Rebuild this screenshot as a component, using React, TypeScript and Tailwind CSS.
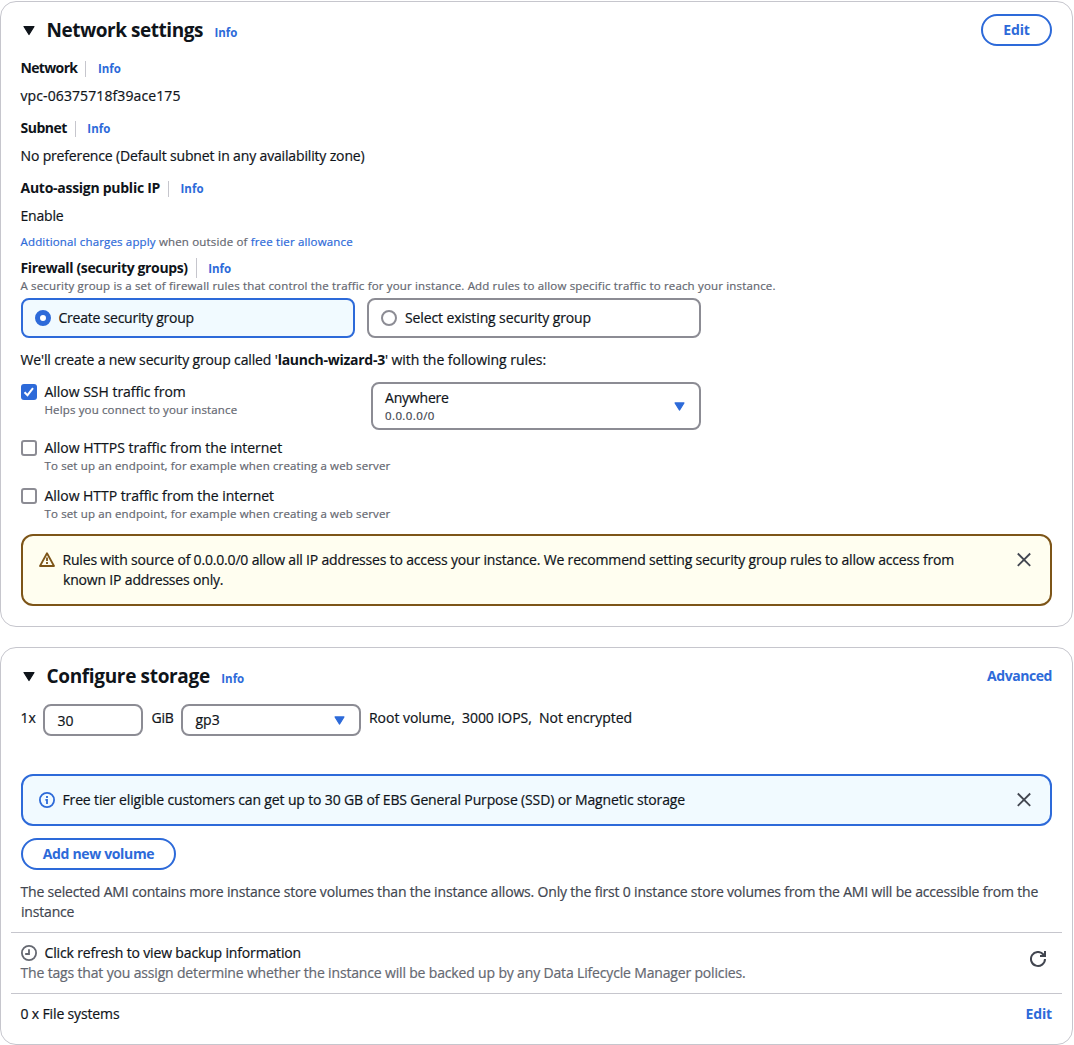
import type { ReactNode } from "react";

function Caret({ className }: { className: string }) {
  return (
    <svg viewBox="0 0 12 10" className={className} fill="currentColor" stroke="currentColor" strokeLinejoin="round">
      <path d="M1 1h10L6 9Z" strokeWidth="1.2" />
    </svg>
  );
}

function CloseIcon() {
  return (
    <svg viewBox="0 0 16 16" className="size-4 text-[#424650]" fill="none" stroke="currentColor" strokeWidth="1.8">
      <path d="m1.8 1.5 12.4 12.4M14.2 1.5 1.8 13.9" />
    </svg>
  );
}

function WarningIcon() {
  return (
    <svg viewBox="0 0 16 16" className="size-4 text-[#7d5518]" fill="none" stroke="currentColor" strokeWidth="1.8" strokeLinejoin="round">
      <path d="M8 1.2 15 14H1Z" />
      <path d="M8 5.5V9M8 10v2" />
    </svg>
  );
}

function InfoIcon() {
  return (
    <svg viewBox="0 0 16 16" className="size-4 text-[#2d6ad9]" fill="none" stroke="currentColor" strokeWidth="1.8">
      <circle cx="8" cy="8" r="7.1" />
      <path d="M8 12V7.8H6.4M8 4v2" />
    </svg>
  );
}

function PendingIcon() {
  return (
    <svg viewBox="0 0 16 16" className="size-4 text-[#656871]" fill="none" stroke="currentColor" strokeWidth="1.8">
      <circle cx="8" cy="8" r="7.1" />
      <path d="M8 4.2V9H4.2" />
    </svg>
  );
}

function RefreshIcon() {
  return (
    <svg viewBox="0 0 16 16" className="size-4 text-[#424650]" fill="none" stroke="currentColor" strokeWidth="2">
      <path d="M10 5h5V0" />
      <path d="M15 8a7 7 0 1 1-1.6-4.5L15 5" />
    </svg>
  );
}

function Info() {
  return <a className="text-[11.5px] leading-4 font-bold text-[#2d6ad9] [-webkit-text-stroke:0]">Info</a>;
}

function Label({ children, tall = false }: { children: ReactNode; tall?: boolean }) {
  return (
    <div className="flex h-5 items-center font-bold [-webkit-text-stroke:0]">
      {children}
      <span className={tall ? "ml-2 h-5 w-px bg-[#c6c6cd]" : "mt-0.5 ml-2 h-4 w-px bg-[#c6c6cd]"} />
      <span className="ml-3 flex pt-0.5"><Info /></span>
    </div>
  );
}

function Header({ title, children }: { title: ReactNode; children: ReactNode }) {
  return (
    <div className="flex h-8 items-center">
      <Caret className="mx-0.5 h-[11px] w-3" />
      <h2 className="ml-2.5 text-[19px] leading-6 font-bold [-webkit-text-stroke:0]">{title}</h2>
      <span className="mt-1.5 ml-3 flex"><Info /></span>
      <div className="ml-auto flex">{children}</div>
    </div>
  );
}

function Check({ label, help, checked = false }: { label: ReactNode; help: ReactNode; checked?: boolean }) {
  return (
    <div className="flex gap-2">
      {checked ? (
        <span className="mt-0.5 flex size-4 items-center justify-center rounded-[3px] bg-[#2d6ad9]">
          <svg viewBox="0 0 16 16" className="size-4" fill="none" stroke="white" strokeWidth="2">
            <path d="m3.5 8.2 3 3 5.5-7" />
          </svg>
        </span>
      ) : (
        <span className="mt-0.5 size-4 rounded-[3px] border-2 border-[#8c8c94] bg-white" />
      )}
      <div>
        <div>{label}</div>
        <div className="text-[11.5px] leading-4 text-[#656871]">{help}</div>
      </div>
    </div>
  );
}

export default function App() {
  return (
    <main className="h-[1045px] w-[1074px] overflow-hidden bg-white pt-px indent-[-0.5px] font-['Open_Sans','Noto_Sans',sans-serif] text-sm leading-5 text-[#0f141a] [-webkit-text-stroke:0.2px]">
      <section className="h-[626px] w-[1073px] rounded-2xl border border-[#c6c6cd] px-5 pt-3">
        <Header title={<span className="tracking-[-0.47px]">Network settings</span>}>
          <button className="h-8 w-[71px] rounded-full border-2 border-[#2d6ad9] font-bold tracking-[-0.15px] text-[#2d6ad9] [-webkit-text-stroke:0]">Edit</button>
        </Header>

        <div className="mt-3 flex flex-col gap-3">
          <div>
            <Label><span className="tracking-[-0.65px]">Network</span></Label>
            <p className="mt-2 tracking-[0.1px]">vpc-06375718f39ace175</p>
          </div>
          <div>
            <Label><span className="tracking-[-0.5px]">Subnet</span></Label>
            <p className="mt-2 tracking-[-0.155px]">No preference (Default subnet in any availability zone)</p>
          </div>
          <div>
            <Label><span className="tracking-[-0.27px]">Auto-assign public IP</span></Label>
            <p className="mt-2 tracking-[-0.18px]">Enable</p>
          </div>
        </div>

        <p className="mt-2 text-[11.5px] leading-4 tracking-[0.16px] text-[#656871]">
          <a className="text-[#2d6ad9]">Additional charges apply</a> when outside of <a className="text-[#2d6ad9]">free tier allowance</a>
        </p>

        <div className="mt-2">
          <Label tall><span className="tracking-[-0.36px]">Firewall (security groups)</span></Label>
          <p className="text-[11.5px] leading-4 tracking-[0.163px] text-[#656871]">
            A security group is a set of firewall rules that control the traffic for your instance. Add rules to allow specific traffic to reach your instance.
          </p>
        </div>

        <div className="mt-1 flex w-[680px] gap-3">
          <div className="flex h-10 flex-1 items-center gap-2 rounded-lg border-2 border-[#2d6ad9] bg-[#f1faff] px-3">
            <span className="size-4 rounded-full border-5 border-[#2d6ad9] bg-white" />
            <span className="tracking-[-0.23px]">Create security group</span>
          </div>
          <div className="flex h-10 flex-1 items-center gap-2 rounded-lg border-2 border-[#8c8c94] px-3">
            <span className="size-4 rounded-full border-2 border-[#8c8c94]" />
            <span className="indent-0 tracking-[-0.12px]">Select existing security group</span>
          </div>
        </div>

        <p className="mt-3 tracking-[-0.15px]">
          We'll create a new security group called '<b className="font-bold tracking-[-0.27px] [-webkit-text-stroke:0]">launch-wizard-3</b>
          <span className="tracking-[-0.04px]">' with the following rules:</span>
        </p>

        <div className="mt-3 flex w-[680px] justify-between">
          <Check
            checked
            label={<span className="tracking-[-0.02px]">Allow SSH traffic from</span>}
            help={<span className="tracking-[0.14px]">Helps you connect to your instance</span>}
          />
          <div className="flex h-12 w-[330px] items-center justify-between rounded-lg border-2 border-[#8c8c94] pr-[14.5px] pl-3 indent-0">
            <div>
              <div className="leading-[18px] tracking-[-0.2px]">Anywhere</div>
              <div className="pt-px text-[11.5px] leading-4 tracking-[0.4px] text-[#424650]">0.0.0.0/0</div>
            </div>
            <Caret className="h-[9px] w-[11px] text-[#2d6ad9]" />
          </div>
        </div>

        <div className="mt-2 flex flex-col gap-3">
          <Check
            label={<span className="tracking-[-0.03px]">Allow HTTPS traffic from the internet</span>}
            help={<span className="tracking-[0.133px]">To set up an endpoint, for example when creating a web server</span>}
          />
          <Check
            label={<span className="tracking-[-0.045px]">Allow HTTP traffic from the internet</span>}
            help={<span className="tracking-[0.133px]">To set up an endpoint, for example when creating a web server</span>}
          />
        </div>

        <div className="mt-3 flex h-[72px] gap-2 rounded-xl border-2 border-[#7d5518] bg-[#fffef0] px-4 pt-3.5">
          <span className="flex h-5 items-center"><WarningIcon /></span>
          <p className="w-[900px] tracking-[-0.18px]">
            Rules with source of 0.0.0.0/0 allow all IP addresses to access your instance. We recommend setting security group rules to allow access from known IP addresses only.
          </p>
          <button className="mr-[2px] ml-auto flex h-5 items-center"><CloseIcon /></button>
        </div>
      </section>

      <section className="mt-5 h-[398px] w-[1073px] rounded-2xl border border-[#c6c6cd] px-5 pt-3">
        <Header title={<span className="tracking-[-0.34px]">Configure storage</span>}>
          <a className="font-bold tracking-[-0.44px] text-[#2d6ad9] [-webkit-text-stroke:0]">Advanced</a>
        </Header>

        <div className="mt-3 flex h-8">
          <span className="mt-1 w-[22px]">1x</span>
          <div className="flex h-8 w-[100px] items-center rounded-lg border-2 border-[#8c8c94] px-[13px] pt-px">30</div>
          <span className="mt-1 ml-[9px] w-[29px] tracking-[-0.2px]">GiB</span>
          <div className="flex h-8 w-[180px] items-center justify-between rounded-lg border-2 border-[#8c8c94] pr-[14.5px] pl-[13px]">
            gp3
            <Caret className="h-[9px] w-[11px] text-[#2d6ad9]" />
          </div>
          <span className="mt-1 ml-[8.5px] tracking-[-0.03px] whitespace-pre">{"Root volume,  3000 IOPS,  Not encrypted"}</span>
        </div>

        <div className="mt-[38px] flex h-[52px] items-center gap-2 rounded-xl border-2 border-[#2d6ad9] bg-[#f1faff] px-4">
          <InfoIcon />
          <p className="tracking-[-0.145px]">Free tier eligible customers can get up to 30 GB of EBS General Purpose (SSD) or Magnetic storage</p>
          <button className="mr-[2px] ml-auto flex"><CloseIcon /></button>
        </div>

        <button className="mt-3 block h-8 w-[155px] rounded-full border-2 border-[#2d6ad9] font-bold tracking-[-0.34px] text-[#2d6ad9] [-webkit-text-stroke:0]">
          Add new volume
        </button>

        <p className="mt-3 tracking-[-0.18px] text-[#424650]">
          The selected AMI contains more instance store volumes than the instance allows. Only the first 0 instance store volumes from the AMI will be accessible from the instance
        </p>

        <div className="-mx-2.5 mt-2.5 flex h-[61px] items-center justify-between border-t border-[#c6c6cd] px-2.5">
          <div>
            <div className="flex items-center gap-2">
              <PendingIcon />
              <span className="tracking-[-0.155px]">Click refresh to view backup information</span>
            </div>
            <p className="tracking-[-0.165px] text-[#656871]">
              The tags that you assign determine whether the instance will be backed up by any Data Lifecycle Manager policies.
            </p>
          </div>
          <button className="mr-[6px] -mt-2"><RefreshIcon /></button>
        </div>

        <div className="-mx-2.5 flex justify-between border-t border-[#c6c6cd] px-2.5 pt-2.5">
          <span className="tracking-[-0.145px]">0 x File systems</span>
          <a className="font-bold tracking-[-0.15px] text-[#2d6ad9] [-webkit-text-stroke:0]">Edit</a>
        </div>
      </section>
    </main>
  );
}
